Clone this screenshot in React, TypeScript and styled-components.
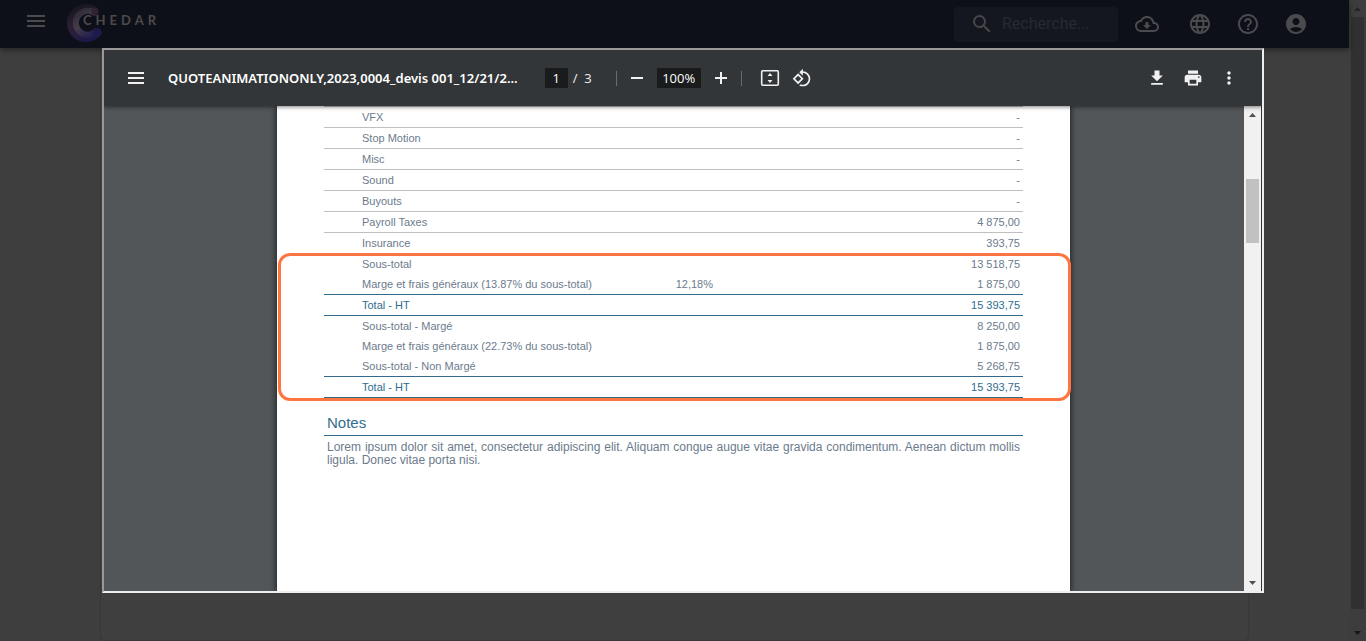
import React from "react";
import styled, { createGlobalStyle } from "styled-components";
import {
  MdAccountCircle,
  MdFileDownload,
  MdHelpOutline,
  MdLanguage,
  MdMenu,
  MdMoreVert,
  MdPrint,
  MdRotate90DegreesCcw,
  MdSearch,
} from "react-icons/md";

const GlobalStyle = createGlobalStyle`
  * { box-sizing: border-box; }
  body {
    margin: 0;
    background: #3e3e3e;
    font-family: "Liberation Sans", Arial, sans-serif;
  }
`;

const Shell = styled.div`
  display: flex;
  height: 100vh;
  overflow: hidden;
`;

const Site = styled.div`
  flex: 1;
  min-width: 0;
  display: flex;
  flex-direction: column;
`;

const SiteHeader = styled.header`
  display: flex;
  align-items: center;
  flex: none;
  height: 48px;
  padding: 0 41px 0 24px;
  background: #0e1019;
  box-shadow: 0 2px 6px rgba(0, 0, 0, 0.45);
  z-index: 1;
`;

const IconButton = styled.button<{ $size?: number; $color?: string }>`
  display: flex;
  align-items: center;
  justify-content: center;
  flex: none;
  width: ${(p) => p.$size ?? 24}px;
  height: ${(p) => p.$size ?? 24}px;
  padding: 0;
  border: 0;
  background: none;
  color: ${(p) => p.$color ?? "#4b4b4e"};
`;

const MenuSlot = styled.div`
  padding-bottom: 6px;
`;

const Brand = styled.a`
  display: flex;
  align-items: center;
  height: 40px;
  margin-left: 18px;
  text-decoration: none;
`;

const BrandName = styled.span`
  margin-left: -23px;
  padding-bottom: 8px;
  font: 700 13px/16px Lato, sans-serif;
  letter-spacing: 4px;
  color: #4d4a4b;
`;

const SearchBox = styled.label`
  display: flex;
  align-items: center;
  gap: 8px;
  width: 164px;
  height: 35px;
  margin: 0 17px 0 auto;
  padding-left: 16px;
  border-radius: 4px;
  background: #14171f;
  color: #474749;
`;

const SearchInput = styled.input`
  flex: 1;
  min-width: 0;
  padding: 0;
  border: 0;
  background: none;
  font: 16px/20px Roboto, sans-serif;
  color: #4b4b4e;
  &::placeholder {
    color: #292a2f;
    opacity: 1;
  }
`;

const HeaderActions = styled.nav`
  display: flex;
  gap: 24px;
  & > :first-child {
    margin-right: 5px;
  }
`;

const Main = styled.main`
  flex: 1;
  padding: 0 101px 1px 101px;
`;

const Card = styled.section`
  height: 100%;
  border-radius: 0 0 4px 4px;
  background: #3f3f3f;
  box-shadow: 0 0 2px rgba(0, 0, 0, 0.35);
`;

const Scrollbar = styled.div<{ $dark?: boolean }>`
  display: flex;
  flex-direction: column;
  flex: none;
  width: 17px;
  background: ${(p) => (p.$dark ? "#3d3d3d" : "#f1f1f1")};
`;

const Track = styled.div<{ $before: number; $after: number }>`
  flex: 1;
  display: grid;
  grid-template-rows: ${(p) => p.$before}fr auto ${(p) => p.$after}fr;
  padding: 0 2px;
`;

const Thumb = styled.div<{ $height: string; $color: string }>`
  grid-row: 2;
  height: ${(p) => p.$height};
  background: ${(p) => p.$color};
`;

const Overlay = styled.div`
  position: fixed;
  inset: 0;
  z-index: 2;
  padding: 48px 102px;
`;

const Viewer = styled.section`
  display: flex;
  flex-direction: column;
  height: 100%;
  border: 2px solid;
  border-color: #9a9899 #eeeeee #eeeeee #9a9899;
  background: #525659;
  overflow: hidden;
`;

const Toolbar = styled.header`
  display: flex;
  align-items: center;
  flex: none;
  height: 56px;
  padding: 0 17px 0 16px;
  background: #323639;
  color: #f1f1f1;
  font: 13px/20px "Open Sans", sans-serif;
  box-shadow: 0 1px 4px rgba(0, 0, 0, 0.5);
  z-index: 1;
`;

const Title = styled.h1`
  flex: 0 1 auto;
  min-width: 0;
  margin: 0 27px 0 16px;
  overflow: hidden;
  white-space: nowrap;
  font: 600 13px/20px "Noto Sans", sans-serif;
  color: #ffffff;
`;

const FieldBox = styled.input<{ $width: number }>`
  flex: none;
  width: ${(p) => p.$width}px;
  height: 20px;
  padding: 0;
  border: 0;
  background: #191b1c;
  color: #ffffff;
  font: inherit;
  text-align: center;
`;

const PageCount = styled.span`
  margin: 0 24px 0 5px;
  white-space: pre;
`;

const Separator = styled.span`
  width: 1px;
  height: 15px;
  background: #6a6d70;
`;

const ToolGroup = styled.div<{ $margin?: string; $gap?: number }>`
  display: flex;
  align-items: center;
  gap: ${(p) => p.$gap ?? 0}px;
  margin: ${(p) => p.$margin ?? "0"};
`;

const ViewerBody = styled.div`
  display: flex;
  flex: 1;
  min-height: 0;
  border-right: 1px solid #323639;
`;

const Canvas = styled.div`
  flex: 1;
  display: flex;
  justify-content: center;
  min-width: 0;
  padding-right: 1px;
  overflow: hidden;
`;

const Sheet = styled.article`
  position: relative;
  flex: 0 1 793px;
  padding: 0 47px;
  background: #ffffff;
  box-shadow: 0 0 6px 1px rgba(0, 0, 0, 0.6);
  color: #6b7b8d;
`;

const Budget = styled.table`
  width: 100%;
  border-collapse: separate;
  border-spacing: 0;
  border-top: 1px solid #c0c0c0;
  font-size: 11px;
  line-height: 20px;
`;

type Line = "none" | "light" | "strong";

const lineColors: Record<Line, string> = {
  none: "transparent",
  light: "#bfbfbf",
  strong: "#33698a",
};

const Row = styled.tr<{ $line: Line; $total?: boolean }>`
  color: ${(p) => (p.$total ? "#2f6d8e" : "inherit")};
  & > * {
    height: 20px;
    border-bottom: ${(p) => (p.$line === "none" ? 0 : 1)}px solid ${(p) => lineColors[p.$line]};
  }
`;

const Label = styled.th`
  padding: 0 0 0 38px;
  font-weight: 400;
  text-align: left;
`;

const Cell = styled.td<{ $width: number }>`
  width: ${(p) => p.$width}px;
  padding: 0 3px 0 0;
  text-align: right;
`;

const Highlight = styled.div`
  position: absolute;
  top: 147px;
  left: 1px;
  right: -1px;
  height: 148px;
  border: 3px solid #ff7541;
  border-radius: 12px;
  pointer-events: none;
`;

const NotesTitle = styled.h2`
  margin: 15px 0 5px;
  padding: 0 3px 2px;
  border-bottom: 1px solid #33698a;
  font-size: 15px;
  font-weight: 400;
  line-height: 20px;
  color: #2f6d8e;
`;

const NotesText = styled.p`
  margin: 0;
  padding: 0 3px;
  font-size: 12px;
  line-height: 13px;
  text-align: justify;
`;

interface BudgetLine {
  label: string;
  rate?: string;
  amount: string;
  line: Line;
  total?: boolean;
}

const budget: BudgetLine[] = [
  { label: "VFX", amount: "-", line: "light" },
  { label: "Stop Motion", amount: "-", line: "light" },
  { label: "Misc", amount: "-", line: "light" },
  { label: "Sound", amount: "-", line: "light" },
  { label: "Buyouts", amount: "-", line: "light" },
  { label: "Payroll Taxes", amount: "4 875,00", line: "light" },
  { label: "Insurance", amount: "393,75", line: "light" },
  { label: "Sous-total", amount: "13 518,75", line: "none" },
  { label: "Marge et frais généraux (13.87% du sous-total)", rate: "12,18%", amount: "1 875,00", line: "strong" },
  { label: "Total - HT", amount: "15 393,75", line: "strong", total: true },
  { label: "Sous-total - Margé", amount: "8 250,00", line: "none" },
  { label: "Marge et frais généraux (22.73% du sous-total)", amount: "1 875,00", line: "none" },
  { label: "Sous-total - Non Margé", amount: "5 268,75", line: "strong" },
  { label: "Total - HT", amount: "15 393,75", line: "strong", total: true },
];

const Arrow = ({ down, color }: { down?: boolean; color: string }) => (
  <svg width="7" height="4" viewBox="0 0 7 4" fill={color} aria-hidden="true">
    <path d={down ? "M0 0h7L3.5 4z" : "M0 4h7L3.5 0z"} />
  </svg>
);

const LogoMark = () => (
  <svg width="40" height="40" viewBox="0 0 40 40" fill="none" aria-hidden="true">
    <defs>
      <linearGradient id="ring" x1="12" y1="2" x2="26" y2="36" gradientUnits="userSpaceOnUse">
        <stop offset="0" stopColor="#17171f" />
        <stop offset="0.45" stopColor="#2c2034" />
        <stop offset="0.75" stopColor="#291c42" />
        <stop offset="1" stopColor="#1b1946" />
      </linearGradient>
      <linearGradient id="inner" x1="12" y1="5" x2="28" y2="32" gradientUnits="userSpaceOnUse">
        <stop offset="0" stopColor="#2b2932" />
        <stop offset="0.5" stopColor="#443d48" />
        <stop offset="1" stopColor="#211b50" />
      </linearGradient>
    </defs>
    <path d="M28 7A14.500 14.500 0 1 0 31 28.500" stroke="url(#ring)" strokeWidth="9" strokeLinecap="round" />
    <path d="M28 8.500A12 12 0 1 0 30 27.500" stroke="url(#inner)" strokeWidth="6" strokeLinecap="round" />
    <circle cx="29" cy="7.500" r="3.500" fill="#2f2233" />
    <circle cx="31" cy="28.500" r="4.500" fill="#1f1a4c" />
  </svg>
);

const CloudIcon = () => (
  <svg width="24" height="24" viewBox="0 0 24 24" fill="currentColor" aria-hidden="true">
    <path d="M8,13H10.55V10H13.45V13H16L12,17L8,13M19.35,10.04C21.95,10.22 24,12.36 24,15A5,5 0 0,1 19,20H6A6,6 0 0,1 0,14C0,10.91 2.34,8.36 5.35,8.04C6.6,5.64 9.11,4 12,4C15.64,4 18.67,6.59 19.35,10.04M19,18A3,3 0 0,0 22,15C22,13.45 20.78,12.14 19.22,12.04L17.69,11.93L17.39,10.43C16.88,7.86 14.62,6 12,6C9.94,6 8.08,7.14 7.13,8.97L6.63,9.92L5.56,10.03C3.53,10.24 2,11.95 2,14A4,4 0 0,0 6,18H19Z" />
  </svg>
);

const ToolIcon = ({ d }: { d: string }) => (
  <svg width="20" height="20" viewBox="0 0 20 20" fill="currentColor" aria-hidden="true">
    <path d={d} />
  </svg>
);

const FitIcon = () => (
  <svg width="20" height="20" viewBox="0 0 20 20" aria-hidden="true">
    <rect x="1.700" y="2.800" width="16.600" height="14.400" rx="1" fill="none" stroke="currentColor" strokeWidth="1.600" />
    <path d="M10 5l2.500 3h-5zM10 15l2.500-3h-5z" fill="currentColor" />
  </svg>
);

const toolColor = "#f1f1f1";

export default function App() {
  return (
    <>
      <GlobalStyle />
      <Shell>
        <Site>
          <SiteHeader>
            <MenuSlot>
              <IconButton aria-label="Menu"><MdMenu size={24} /></IconButton>
            </MenuSlot>
            <Brand href="#" aria-label="Chedar">
              <LogoMark />
              <BrandName>CHEDAR</BrandName>
            </Brand>
            <SearchBox>
              <MdSearch size={24} aria-hidden="true" />
              <SearchInput type="search" aria-label="Recherche" placeholder="Recherche..." />
            </SearchBox>
            <HeaderActions>
              <IconButton aria-label="Téléchargements"><CloudIcon /></IconButton>
              <IconButton aria-label="Langue"><MdLanguage size={24} /></IconButton>
              <IconButton aria-label="Aide"><MdHelpOutline size={24} /></IconButton>
              <IconButton aria-label="Compte"><MdAccountCircle size={24} /></IconButton>
            </HeaderActions>
          </SiteHeader>
          <Main>
            <Card />
          </Main>
        </Site>
        <Scrollbar $dark>
          <IconButton $size={17} aria-label="Haut"><Arrow color="#242424" /></IconButton>
          <Track $before={0} $after={1}>
            <Thumb $height="calc(100vh - 49px)" $color="#303030" />
          </Track>
          <IconButton $size={17} aria-label="Bas"><Arrow down color="#161616" /></IconButton>
        </Scrollbar>
      </Shell>

      <Overlay>
        <Viewer role="dialog" aria-label="Devis">
          <Toolbar>
            <IconButton $size={32} $color={toolColor} aria-label="Menu du document">
              <ToolIcon d="M2 4h16v2H2zM2 9h16v2H2zM2 14h16v2H2z" />
            </IconButton>
            <Title>QUOTEANIMATIONONLY,2023,0004_devis 001_12/21/2...</Title>
            <FieldBox $width={23} aria-label="Page" defaultValue="1" />
            <PageCount>{"/  3"}</PageCount>
            <Separator />
            <ToolGroup $margin="0 4px">
              <IconButton $size={32} $color={toolColor} aria-label="Zoom arrière">
                <ToolIcon d="M4 9h12v2H4z" />
              </IconButton>
              <ToolGroup $margin="0 4px">
                <FieldBox $width={44} aria-label="Zoom" defaultValue="100%" />
              </ToolGroup>
              <IconButton $size={32} $color={toolColor} aria-label="Zoom avant">
                <ToolIcon d="M4 9h5V4h2v5h5v2h-5v5H9v-5H4z" />
              </IconButton>
            </ToolGroup>
            <Separator />
            <ToolGroup $margin="0 auto 0 12px">
              <IconButton $size={32} $color={toolColor} aria-label="Ajuster à la page"><FitIcon /></IconButton>
              <IconButton $size={32} $color={toolColor} aria-label="Pivoter"><MdRotate90DegreesCcw size={20} /></IconButton>
            </ToolGroup>
            <ToolGroup $gap={4}>
              <IconButton $size={32} $color={toolColor} aria-label="Télécharger"><MdFileDownload size={20} /></IconButton>
              <IconButton $size={32} $color={toolColor} aria-label="Imprimer"><MdPrint size={20} /></IconButton>
              <IconButton $size={32} $color={toolColor} aria-label="Plus"><MdMoreVert size={20} /></IconButton>
            </ToolGroup>
          </Toolbar>
          <ViewerBody>
            <Canvas>
              <Sheet>
                <Budget>
                  <tbody>
                    {budget.map((item, i) => (
                      <Row key={i} $line={item.line} $total={item.total}>
                        <Label scope="row">{item.label}</Label>
                        <Cell $width={80}>{item.rate}</Cell>
                        <Cell $width={307}>{item.amount}</Cell>
                      </Row>
                    ))}
                  </tbody>
                </Budget>
                <NotesTitle>Notes</NotesTitle>
                <NotesText>
                  Lorem ipsum dolor sit amet, consectetur adipiscing elit. Aliquam congue augue vitae gravida
                  condimentum. Aenean dictum mollis ligula. Donec vitae porta nisi.
                </NotesText>
                <Highlight />
              </Sheet>
            </Canvas>
            <Scrollbar>
              <IconButton $size={17} aria-label="Défiler vers le haut"><Arrow color="#505050" /></IconButton>
              <Track $before={56} $after={331}>
                <Thumb $height="64px" $color="#c1c1c1" />
              </Track>
              <IconButton $size={17} aria-label="Défiler vers le bas"><Arrow down color="#505050" /></IconButton>
            </Scrollbar>
          </ViewerBody>
        </Viewer>
      </Overlay>
    </>
  );
}
